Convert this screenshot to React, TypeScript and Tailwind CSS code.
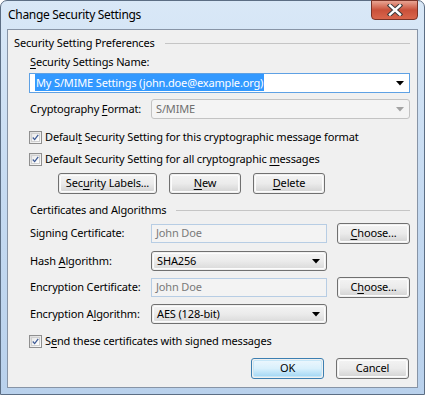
import React from 'react'

const FONT = { fontFamily: '"Noto Sans", "Open Sans", Arial, sans-serif' }

function Mn({ children }: { children: React.ReactNode }) {
  return <span className="underline underline-offset-2 decoration-1">{children}</span>
}

function Arrow({ disabled }: { disabled?: boolean }) {
  return (
    <svg width="8" height="5" viewBox="0 0 8 5" className="shrink-0">
      <path d="M0 0H8L4 4.5Z" fill={disabled ? '#a3a3a3' : '#000'} />
    </svg>
  )
}

function Check() {
  return (
    <div className="w-[13px] h-[13px] shrink-0 border border-[#8f8f8f] bg-gradient-to-br from-[#dcdcdc] to-[#fbfbfb] p-[1px]">
      <div className="w-full h-full border border-[#d0d0d0] bg-gradient-to-br from-[#e9e9e9] to-white flex items-center justify-center">
        <svg width="9" height="9" viewBox="0 0 9 9">
          <path d="M1 4.5L3.4 7.2L8 1" fill="none" stroke="#3d5a95" strokeWidth="1.6" />
        </svg>
      </div>
    </div>
  )
}

function Btn({ w, children, isDefault }: { w: string; children: React.ReactNode; isDefault?: boolean }) {
  return (
    <div
      className={`${w} h-[21px] rounded-[3px] border p-[1px] ${
        isDefault ? 'border-[#3c7fb1]' : 'border-[#707070]'
      }`}
    >
      <div
        className={`h-full rounded-[2px] border flex items-center justify-center text-black whitespace-nowrap ${
          isDefault
            ? 'border-[#c6e6f7] bg-gradient-to-b from-[#eaf6fd] via-[#d9f0fc] to-[#a7d9f5]'
            : 'border-[#fcfcfc] bg-gradient-to-b from-[#f2f2f2] via-[#ebebeb] to-[#d6d6d6]'
        }`}
      >
        {children}
      </div>
    </div>
  )
}

function DropBox({ value, w }: { value: string; w: string }) {
  return (
    <div className={`${w} h-[20px] rounded-[3px] border border-[#707070] p-[1px]`}>
      <div className="h-full rounded-[2px] border border-[#fcfcfc] bg-gradient-to-b from-[#f2f2f2] via-[#ebebeb] to-[#dcdcdc] flex items-center pl-[3px] pr-[4px] text-black">
        <span className="flex-1">{value}</span>
        <Arrow />
      </div>
    </div>
  )
}

function DisabledText({ value }: { value: string }) {
  return (
    <div className="w-[176px] h-[19px] border border-[#b7cde4] bg-[#f3f3f3] flex items-center pl-[4px] text-[#7a7a7a]">
      {value}
    </div>
  )
}

function GroupHead({ title, line }: { title: string; line: string }) {
  return (
    <div className="flex items-center h-[14px]">
      <span className="text-black whitespace-nowrap">{title}</span>
      <div className={`${line} flex-1 mr-[7px] border-t border-[#c5c5c5]`} />
    </div>
  )
}

export default function App() {
  return (
    <div className="w-[425px] h-[395px] bg-white text-[11px] tracking-[-0.15px]" style={FONT}>
      <div className="w-[425px] h-[395px] rounded-t-[7px] border border-[#5c6e84] bg-gradient-to-b from-[#d9e8f7] via-[#c5daf1] to-[#b9d1ec] flex flex-col">
        {/* title bar */}
        <div className="h-[28px] flex items-start relative">
          <span className="pl-[7px] pt-[5px] text-[12px] tracking-[-0.3px] text-black">Change Security Settings</span>
          <div className="absolute right-[6px] top-[-1px] w-[47px] h-[20px] rounded-b-[4px] border border-[#7a3327] bg-gradient-to-b from-[#e8a493] via-[#c9503a] to-[#d9664c] flex items-center justify-center">
            <svg width="16" height="12" viewBox="0 0 16 12">
              <path d="M3 1.5L13 10.5M13 1.5L3 10.5" stroke="#3b3b3b" strokeWidth="4.4" strokeLinecap="square" />
              <path d="M3 1.5L13 10.5M13 1.5L3 10.5" stroke="#fff" strokeWidth="2.4" strokeLinecap="square" />
            </svg>
          </div>
        </div>

        {/* client */}
        <div className="mx-[6px] mb-[6px] flex-1 border border-[#8794a6] bg-[#f0f0f0] flex flex-col pl-[6px] whitespace-nowrap">
          <div className="mt-[6px]">
            <GroupHead title="Security Setting Preferences" line="ml-[10px]" />
          </div>
          <div className="pl-[15px] flex flex-col">
            <div className="mt-[5px] h-[14px] flex items-center pl-[1px] text-black">
              <span>
                <Mn>S</Mn>ecurity Settings Name:
              </span>
            </div>
            <div className="mt-[4px] w-[381px] h-[20px] border border-[#5ea1e4] bg-white flex items-center pl-[5px] pr-[5px]">
              <span className="flex-1">
                <span className="bg-[#3399ff] text-white px-[1px] py-[1px]">
                  My S/MIME Settings (john.doe@example.org)
                </span>
              </span>
              <Arrow />
            </div>
            <div className="mt-[6px] h-[20px] flex items-center">
              <span className="w-[122px] pl-[1px] text-black">
                Cryptography <Mn>F</Mn>ormat:
              </span>
              <div className="w-[259px] h-[20px] rounded-[3px] border border-[#c3c3c3] bg-[#f4f4f4] flex items-center pl-[4px] pr-[5px] text-[#6f6f6f]">
                <span className="flex-1">S/MIME</span>
                <Arrow disabled />
              </div>
            </div>
            <div className="mt-[11px] h-[14px] flex items-center gap-[3px] text-black">
              <Check />
              <span>
                Defaul<Mn>t</Mn> Security Setting for this cryptographic message format
              </span>
            </div>
            <div className="mt-[8px] h-[14px] flex items-center gap-[3px] text-black">
              <Check />
              <span>
                Default Security Setting for all cryptographic <Mn>m</Mn>essages
              </span>
            </div>
            <div className="mt-[7px] flex gap-[12px] pl-[29px]">
              <Btn w="w-[99px]">
                <span>
                  Sec<Mn>u</Mn>rity Labels...
                </span>
              </Btn>
              <Btn w="w-[72px]">
                <span>
                  <Mn>N</Mn>ew
                </span>
              </Btn>
              <Btn w="w-[72px]">
                <span>
                  <Mn>D</Mn>elete
                </span>
              </Btn>
            </div>
            <div className="mt-[9px] pl-[1px]">
              <GroupHead title="Certificates and Algorithms" line="ml-[10px]" />
            </div>
            <div className="mt-[6px] h-[21px] flex items-center text-black">
              <span className="w-[122px] pl-[1px]">Signing Certificate:</span>
              <DisabledText value="John Doe" />
              <div className="ml-[10px]">
                <Btn w="w-[73px]">
                  <span>
                    <Mn>C</Mn>hoose...
                  </span>
                </Btn>
              </div>
            </div>
            <div className="mt-[7px] h-[20px] flex items-center text-black">
              <span className="w-[122px] pl-[1px]">
                Hash <Mn>A</Mn>lgorithm:
              </span>
              <DropBox value="SHA256" w="w-[176px]" />
            </div>
            <div className="mt-[6px] h-[21px] flex items-center text-black">
              <span className="w-[122px] pl-[1px]">Encryption Certificate:</span>
              <DisabledText value="John Doe" />
              <div className="ml-[10px]">
                <Btn w="w-[73px]">
                  <span>
                    C<Mn>h</Mn>oose...
                  </span>
                </Btn>
              </div>
            </div>
            <div className="mt-[6px] h-[20px] flex items-center text-black">
              <span className="w-[122px] pl-[1px]">
                Encryption A<Mn>l</Mn>gorithm:
              </span>
              <DropBox value="AES (128-bit)" w="w-[176px]" />
            </div>
            <div className="mt-[10px] h-[14px] flex items-center gap-[3px] text-black">
              <Check />
              <span>
                S<Mn>e</Mn>nd these certificates with signed messages
              </span>
            </div>
            <div className="mt-[10px] flex justify-end gap-[12px] pr-[8px]">
              <Btn w="w-[73px]" isDefault>
                OK
              </Btn>
              <Btn w="w-[73px]">Cancel</Btn>
            </div>
          </div>
        </div>
      </div>
    </div>
  )
}
